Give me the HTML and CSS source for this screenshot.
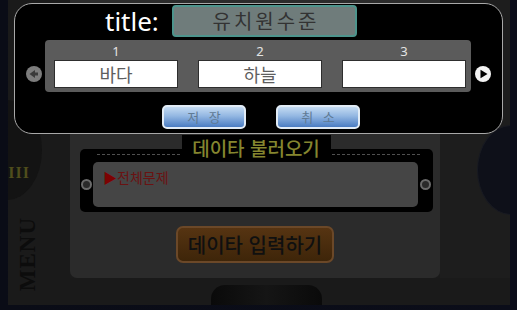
FILE: index.html
```html
<!DOCTYPE html>
<html lang="ko">
<head>
    <meta charset="UTF-8">
    <meta name="viewport" content="width=device-width, initial-scale=1.0">
    <title>데이타 입력</title>
    <link rel="stylesheet" href="styles.css">
</head>
<body>
    <div class="screen">
        <aside class="side">
            <div class="tab-wrap">
                <div class="tab"><span class="grip">III</span></div>
            </div>
            <div class="menu">MENU</div>
        </aside>
        <div class="center">
            <div class="frame">
                <main class="panel">
                    <div class="loader-title">데이타 불러오기</div>
                    <div class="loader">
                        <div class="dash"></div>
                        <div class="loader-row">
                            <span class="arr-s"></span>
                            <div class="list"><span class="mark">▶</span>전체문제</div>
                            <span class="arr-s"></span>
                        </div>
                    </div>
                    <button class="input-btn">데이타 입력하기</button>
                </main>
                <aside class="side-right">
                    <div class="knob-r"></div>
                </aside>
            </div>
            <div class="bottom"><div class="knob"></div></div>
        </div>

        <div class="dialog">
            <div class="title-row">
                <span class="title-label">title:</span>
                <div class="title-box">유치원수준</div>
            </div>
            <div class="words-row">
                <span class="arrow prev">
                    <svg width="16" height="16" viewBox="0 0 16 16"><circle cx="8" cy="8" r="8" fill="#7d7d7d"/><path d="M3.5 8 L9 4 L9 6.5 L12 6.5 L12 9.5 L9 9.5 L9 12 Z" fill="#3a3a3a"/></svg>
                </span>
                <div class="words">
                    <div class="word">
                        <label for="w1">1</label>
                        <input type="text" id="w1" value="바다">
                    </div>
                    <div class="word">
                        <label for="w2">2</label>
                        <input type="text" id="w2" value="하늘">
                    </div>
                    <div class="word">
                        <label for="w3">3</label>
                        <input type="text" id="w3" value="">
                    </div>
                </div>
                <span class="arrow next">
                    <svg width="16" height="16" viewBox="0 0 16 16"><circle cx="8" cy="8" r="8" fill="#f4f4f4"/><path d="M5.5 3.8 L12.5 8 L5.5 12.2 Z" fill="#000"/></svg>
                </span>
            </div>
            <div class="actions">
                <button class="blue-btn">저 장</button>
                <button class="blue-btn">취 소</button>
            </div>
        </div>
    </div>
</body>
</html>
```

FILE: styles.css
```css
body {
    margin: 0;
    background: #0b0d17;
    font-family: "Noto Sans", "Noto Sans CJK KR", sans-serif;
}
.screen {
    position: relative;
    display: flex;
    width: 517px;
    height: 310px;
    padding: 0 7px 5px 8px;
    box-sizing: border-box;
    overflow: hidden;
    background: linear-gradient(90deg, #0a0c16, #0b0d19);
}
.side {
    width: 62px;
    background: #1a1a1a;
}
.tab-wrap {
    height: 205px;
    overflow: hidden;
}
.tab {
    margin-top: 100px;
    margin-left: -36px;
    width: 70px;
    height: 100px;
    border-radius: 50%;
    background: #131313;
    display: flex;
    align-items: flex-end;
    justify-content: flex-end;
    padding: 0 12px 18px 0;
    box-sizing: border-box;
}
.grip {
    color: #4f4d1c;
    font-family: "Liberation Serif", serif;
    font-size: 16px;
    font-weight: bold;
    letter-spacing: 1px;
}
.menu {
    margin: 12px 0 0 9px;
    writing-mode: vertical-rl;
    transform: rotate(180deg);
    font-family: "Liberation Serif", serif;
    font-weight: bold;
    font-size: 23px;
    line-height: 22px;
    letter-spacing: 1px;
    color: #0c0c0c;
}
.center {
    display: flex;
    flex-direction: column;
}
.frame {
    display: flex;
    height: 278px;
    background: #1b1b1b;
}
.panel {
    width: 370px;
    background: #2b2b2b;
    border-radius: 0 0 7px 7px;
    padding-top: 135px;
    display: flex;
    flex-direction: column;
    align-items: center;
    box-sizing: border-box;
}
.loader-title {
    position: relative;
    z-index: 1;
    background: #000;
    width: 149px;
    height: 25px;
    margin-bottom: -11px;
    margin-left: 2px;
    text-align: center;
    font-family: "Noto Sans CJK KR", sans-serif;
    font-size: 19px;
    font-weight: 500;
    line-height: 25px;
    color: #85862f;
}
.loader {
    width: 353px;
    margin-left: 3px;
    background: #000;
    border-radius: 5px;
    padding: 5px 2px 5px 1px;
    box-sizing: border-box;
}
.dash {
    margin: 0 11px 0 16px;
    border-top: 1px dashed #505050;
}
.loader-row {
    margin-top: 7px;
    display: flex;
    align-items: center;
}
.arr-s {
    flex: none;
    width: 11px;
    height: 11px;
    box-sizing: border-box;
    border-radius: 50%;
    border: 2px solid #6a6a6a;
    background: #2a2a2a;
}
.list {
    width: 325px;
    height: 45px;
    margin: 0 2px 0 1px;
    background: #454545;
    border-radius: 5px;
    padding: 7px 10px;
    box-sizing: border-box;
    font-family: "Noto Sans CJK KR", sans-serif;
    font-size: 14px;
    line-height: 16px;
    color: #6a1212;
}
.mark {
    color: #7c0202;
}
.input-btn {
    margin-top: 14px;
    width: 158px;
    height: 37px;
    border: 2px solid #6b4828;
    border-radius: 7px;
    background: linear-gradient(#563412, #3e2509);
    font-family: "Noto Sans CJK KR", sans-serif;
    font-size: 20px;
    font-weight: 500;
    color: #101010;
    padding: 0;
}
.side-right {
    width: 70px;
    overflow: hidden;
    background: #1d1d1d;
}
.knob-r {
    margin: 125px 0 0 37px;
    width: 66px;
    height: 88px;
    border-radius: 50%;
    background: #0e1019;
    border: 1px solid #181a22;
}
.bottom {
    height: 27px;
    padding-top: 7px;
    box-sizing: border-box;
    background: #1a1a1a;
}
.knob {
    margin-left: 141px;
    width: 111px;
    height: 20px;
    border-radius: 14px 14px 0 0;
    background: linear-gradient(90deg, #0a0a0a, #151515 50%, #0a0a0a);
}

/* dialog */
.dialog {
    position: absolute;
    left: 14px;
    top: 3px;
    width: 489px;
    height: 131px;
    box-sizing: border-box;
    border: 1px solid #a8a8a8;
    border-radius: 18px;
    background: #000;
    display: flex;
    flex-direction: column;
}
.title-row {
    display: flex;
    align-items: center;
    margin: 1px 0 0 90px;
}
.title-label {
    color: #fff;
    font-size: 26px;
    line-height: 32px;
    width: 67px;
}
.title-box {
    width: 185px;
    height: 32px;
    box-sizing: border-box;
    border: 2px solid #4d948c;
    border-radius: 4px;
    background: #6f7c7b;
    text-align: center;
    font-family: "Noto Sans CJK KR", sans-serif;
    font-size: 20px;
    line-height: 27px;
    letter-spacing: 3px;
    text-indent: 3px;
    color: #333;
}
.words-row {
    display: flex;
    align-items: center;
    margin: 3px 0 0 11px;
}
.arrow {
    display: flex;
    width: 16px;
    height: 16px;
    margin-top: 16px;
}
.prev {
    margin-right: 3px;
}
.next {
    margin-left: 4px;
}
.words {
    width: 426px;
    height: 52px;
    box-sizing: border-box;
    background: #5b5b5b;
    border-radius: 4px;
    padding: 4px 6px 0 9px;
    display: flex;
    gap: 20px;
}
.word {
    display: flex;
    flex-direction: column;
    align-items: center;
    width: 124px;
}
.word label {
    color: #e4e4e4;
    font-size: 13px;
    line-height: 14px;
    margin-bottom: 2px;
}
.word input {
    width: 124px;
    height: 28px;
    box-sizing: border-box;
    border: 1px solid #2e2e2e;
    background: #fff;
    padding: 0;
    text-align: center;
    font-family: "Noto Sans CJK KR", sans-serif;
    font-size: 18px;
    color: #5e5e5e;
    -webkit-text-fill-color: #5e5e5e;
}
.actions {
    display: flex;
    justify-content: center;
    gap: 30px;
    margin: 13px 0 0 5px;
}
.blue-btn {
    width: 84px;
    height: 24px;
    border: 2px solid #e2ecf6;
    border-radius: 5px;
    background: linear-gradient(#c4dbf2, #93b7e2 45%, #4a7cc2);
    font-family: "Noto Sans CJK KR", sans-serif;
    font-size: 13px;
    color: #5f7a94;
    letter-spacing: 3px;
    text-indent: 3px;
    padding: 0;
    line-height: 18px;
}
```
